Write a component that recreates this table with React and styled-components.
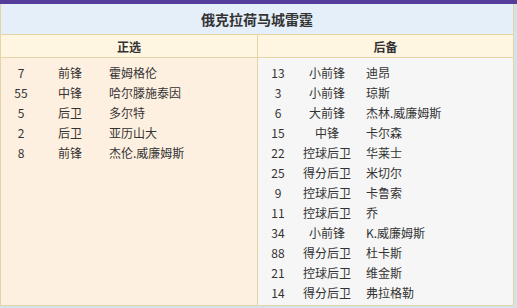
import React from 'react'
import styled, { createGlobalStyle } from 'styled-components'

const GlobalStyle = createGlobalStyle`
    body {
        margin: 0;
        background: #d3e3ea;
        font-family: "Noto Sans CJK SC", "Noto Sans", sans-serif;
        color: #333;
    }
`
const TopBar = styled.div`
    height: 4px;
    background-color: #553d9c;
`
const Table = styled.div`
    width: 514px;
    height: 302px;
    box-sizing: border-box;
    border: 1px solid #e6d3a6;
    border-top: none;
    display: flex;
    flex-direction: column;
`
const Title = styled.div`
    height: 30px;
    background-color: #e5eff9;
    display: flex;
    align-items: center;
    justify-content: center;
    font-size: 14px;
    font-weight: bold;
    border-bottom: 1px solid #e6d3a6;
`
const Halves = styled.div`
    flex: 1;
    display: grid;
    grid-template-columns: 256px 1fr;
`
const Half = styled.div`
    display: flex;
    flex-direction: column;
    background-color: ${props => props.bg};
    border-left: ${props => props.divider ? '1px solid #e6d3a6' : 'none'};
`
const Header = styled.div`
    height: 22px;
    background-color: #fff6e1;
    border-bottom: 1px solid #e6d3a6;
    display: flex;
    align-items: center;
    justify-content: center;
    font-size: 12px;
    font-weight: bold;
`
const Body = styled.div`
    padding-top: 4px;
`
const Row = styled.div`
    display: grid;
    grid-template-columns: 40px 58px 1fr;
    height: 20px;
    align-items: center;
    font-size: 12px;
`
const Num = styled.span`
    text-align: center;
`
const Pos = styled.span`
    text-align: center;
`
const Name = styled.span`
    padding-left: 10px;
`

const starters = [
    ['7', '前锋', '霍姆格伦'],
    ['55', '中锋', '哈尔滕施泰因'],
    ['5', '后卫', '多尔特'],
    ['2', '后卫', '亚历山大'],
    ['8', '前锋', '杰伦.威廉姆斯'],
]

const bench = [
    ['13', '小前锋', '迪昂'],
    ['3', '小前锋', '琼斯'],
    ['6', '大前锋', '杰林.威廉姆斯'],
    ['15', '中锋', '卡尔森'],
    ['22', '控球后卫', '华莱士'],
    ['25', '得分后卫', '米切尔'],
    ['9', '控球后卫', '卡鲁索'],
    ['11', '控球后卫', '乔'],
    ['34', '小前锋', 'K.威廉姆斯'],
    ['88', '得分后卫', '杜卡斯'],
    ['21', '控球后卫', '维金斯'],
    ['14', '得分后卫', '弗拉格勒'],
]

const Roster = ({ title, players, bg, divider }) => (
    <Half bg={bg} divider={divider}>
        <Header>{title}</Header>
        <Body>
            {players.map(([num, pos, name]) => (
                <Row key={num}>
                    <Num>{num}</Num>
                    <Pos>{pos}</Pos>
                    <Name>{name}</Name>
                </Row>
            ))}
        </Body>
    </Half>
)

const App = () => {
  return (
    <>
        <GlobalStyle/>
        <TopBar/>
        <Table>
            <Title>俄克拉荷马城雷霆</Title>
            <Halves>
                <Roster title='正选' players={starters} bg='#fef0e0'/>
                <Roster title='后备' players={bench} bg='#f6f6f6' divider/>
            </Halves>
        </Table>
    </>
  )
}

export default App
